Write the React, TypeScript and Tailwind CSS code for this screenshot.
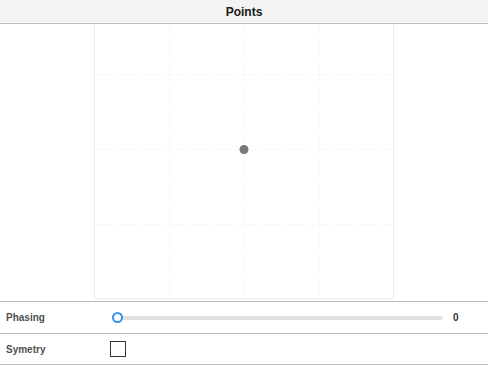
const gridPos = [75, 150, 225];

const Chart = () => {
  return (
    <svg width={300} height={300} className="block">
      <rect x={0.5} y={0.5} width={299} height={299} fill="#ffffff" stroke="#ececec" />
      {gridPos.map((p) => (
        <g key={p}>
          <line x1={p + 0.5} y1={2} x2={p + 0.5} y2={298} stroke="#eeeeee" strokeDasharray="1 2" />
          <line x1={2} y1={p + 0.5} x2={298} y2={p + 0.5} stroke="#eeeeee" strokeDasharray="1 2" />
        </g>
      ))}
      <circle cx={150} cy={150.5} r={4.5} fill="#787878" />
    </svg>
  );
};

const App = () => {
  return (
    <div className="w-[488px] h-[366px] bg-white flex flex-col overflow-hidden font-['Liberation_Sans',Arial,sans-serif]">
      <div className="relative z-10 h-[24px] shrink-0 bg-[#f3f3f3] border-b border-[#bcbcbc] flex items-center justify-center">
        <span className="text-[12px] font-bold text-[#1a1a1a]">Points</span>
      </div>
      <div className="h-[277px] shrink-0 overflow-hidden flex justify-center">
        <div className="mt-[-25px]">
          <Chart />
        </div>
      </div>
      <div className="h-[32px] shrink-0 border-t border-[#bcbcbc] flex items-center">
        <div className="w-[112px] pl-[6px] text-[10px] font-bold text-[#505050]">Phasing</div>
        <div className="relative w-[331px] h-[11px] flex items-center">
          <div className="w-full h-[4px] rounded-full bg-[#e2e2e2]" />
          <div className="absolute left-0 top-0 w-[11px] h-[11px] rounded-full border-[2px] border-[#3391ee] bg-white" />
        </div>
        <div className="ml-[10px] text-[10px] font-bold text-[#333]">0</div>
      </div>
      <div className="h-[32px] shrink-0 border-y border-[#bcbcbc] flex items-center">
        <div className="w-[110px] pl-[6px] text-[10px] font-bold text-[#505050]">Symetry</div>
        <div className="w-[16px] h-[16px] border border-[#333] bg-white" />
      </div>
    </div>
  );
};

export default App;
